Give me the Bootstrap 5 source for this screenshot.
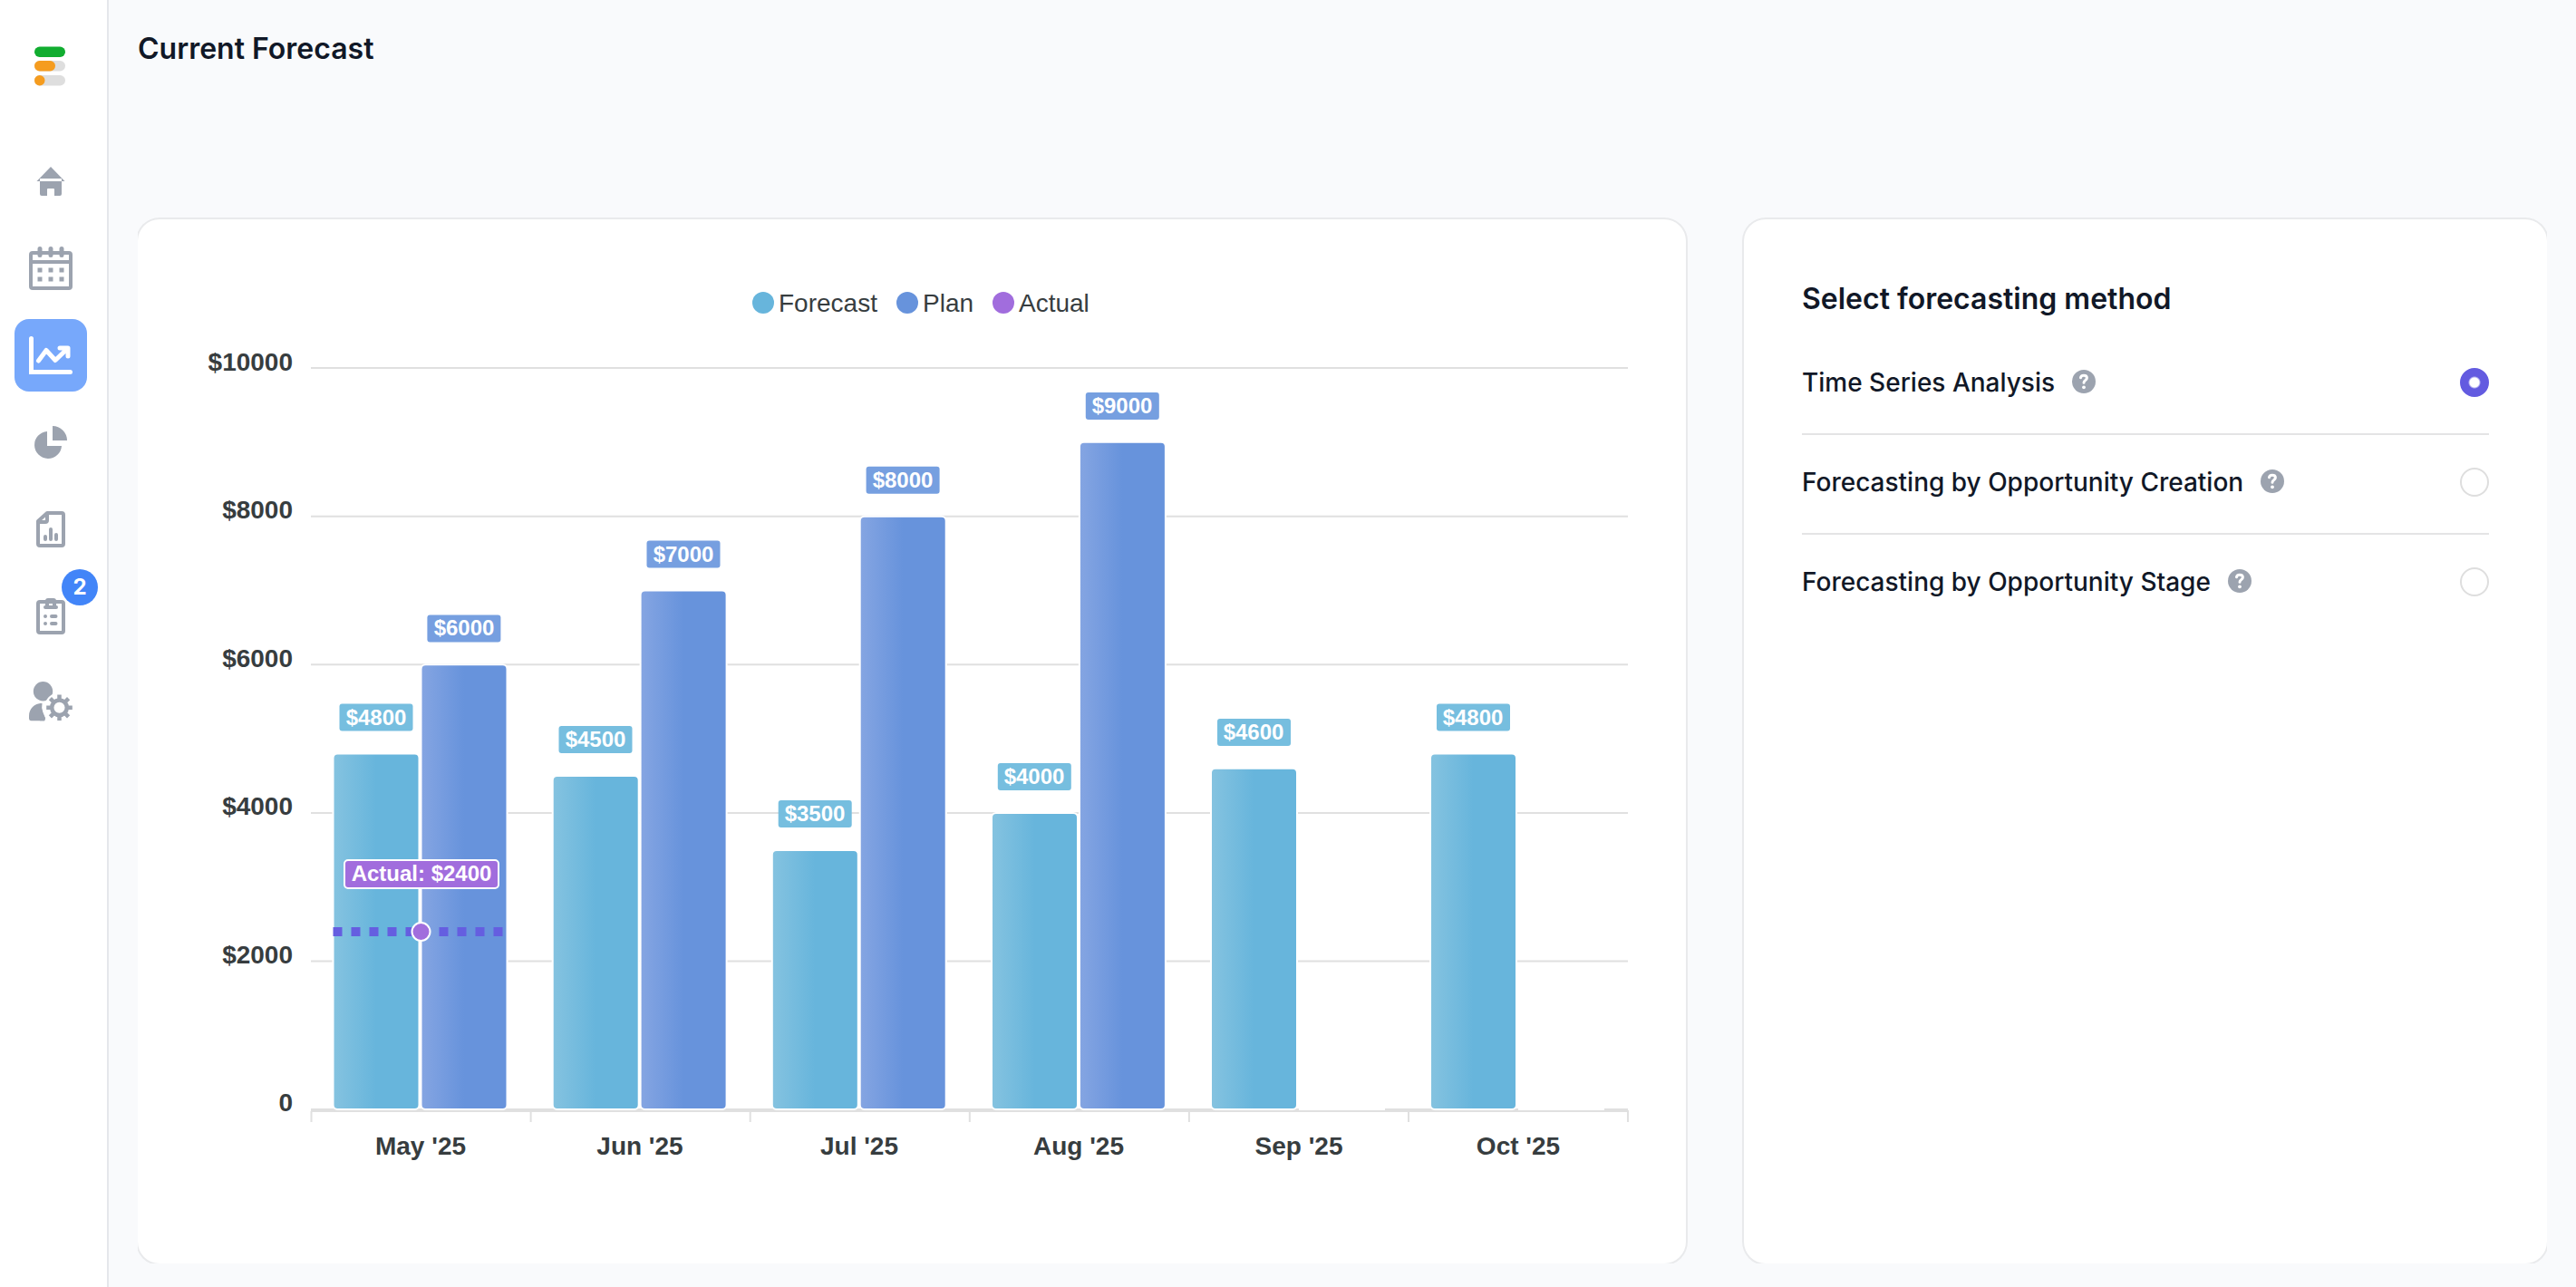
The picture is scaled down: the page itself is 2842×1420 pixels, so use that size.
<!DOCTYPE html>
<html lang="en">
<head>
<meta charset="utf-8">
<meta name="viewport" content="width=device-width, initial-scale=1">
<title>Current Forecast</title>
<link href="https://cdn.jsdelivr.net/npm/bootstrap@5.3.0/dist/css/bootstrap.min.css" rel="stylesheet">
<style>
  body { background: #f9fafc; color: #111827; font-family: Inter, sans-serif; }
  .side-rail { width: 120px; border-right: 2px solid #e5e7eb; padding: 0 16px; }
  .brand-link { width: 80px; height: 160px; padding: 51px 0 0 22px; }
  .rail-nav { gap: 16px; }
  .rail-link { width: 80px; height: 80px; border-radius: 16px; color: #9ca3af; }
  .rail-link svg { width: 48px; height: 48px; }
  .rail-link.active { background: #77a8fb; color: #fff; }
  .count-badge { top: -12px; right: -12px; width: 40px; height: 40px; background: #4285f8; color: #fff; font-size: 24px; line-height: 40px; font-weight: 700; }
  .page-main { min-width: 0; padding: 30px 32px 26px; }
  .page-title, .panel-title { font-size: 32px; line-height: 48px; font-weight: 600; margin: 0; }
  .page-title { margin-bottom: 160px; }
  .panel-area { overflow: hidden; padding-top: 4px; }
  .panel-box { background: #fff; border-radius: 24px; box-shadow: 0 0 0 2px #e9eaec; height: 100%; }
  .chart-col { padding-right: 64px; }
  .method-panel { padding: 64px; }
  .method-row { padding: 32px 0 36px; }
  .method-row + .method-row { border-top: 2px solid #e4e4e5; }
  .method-list { margin-top: 16px; }
  .method-row label { font-size: 28px; line-height: 40px; font-weight: 500; }
  .help-btn { margin-left: 19px; padding: 0 0 2px; color: #9ca3af; line-height: 0; }
  .method-row .form-check-input { width: 32px; height: 32px; border: 2px solid #dedede; margin: 0; }
  .method-row .form-check-input:checked { border-color: #635be0; background: #635be0 radial-gradient(circle, #fff 5px, #635be0 7px); }
  .chart-svg { font-family: "Liberation Sans", Arial, sans-serif; font-size: 28px; fill: #373d3f; }
  .axis-text { font-weight: 700; }
  .grid-lines, .axis-lines { stroke: #e0e0e0; stroke-width: 2; fill: none; }
  .bars-forecast { fill: url(#gForecast); stroke: #fff; stroke-width: 2; }
  .bars-plan { fill: url(#gPlan); stroke: #fff; stroke-width: 2; }
  .tags-forecast { fill: #76bedf; }
  .tags-plan { fill: #769fe0; }
  .tag-text { fill: #fff; font-size: 24px; font-weight: 700; }
</style>
</head>
<body>
<div class="d-flex min-vh-100">
  <aside class="side-rail bg-white flex-shrink-0">
    <a class="brand-link d-block" href="#" aria-label="Home page">
      <svg class="d-block" width="34" height="45" viewBox="0 0 34 45">
        <rect y=".5" width="34" height="11.500" rx="5.700" fill="#11ad30"/>
        <rect y="16" width="34" height="11.500" rx="5.700" fill="#dedede"/>
        <rect y="16" width="23" height="11.500" rx="5.700" fill="#f59c1f"/>
        <rect y="32" width="34" height="11.500" rx="5.700" fill="#dedede"/>
        <rect y="32" width="11.500" height="11.500" rx="5.700" fill="#f59c1f"/>
      </svg>
    </a>
    <nav class="rail-nav d-flex flex-column">
      <a class="rail-link d-flex align-items-center justify-content-center" href="#" aria-label="Dashboard">
        <svg viewBox="0 0 48 48" fill="currentColor"><path d="M24 8 8.500 24H12v-3h24v3h3.500z"/><path d="M12 24h24v14a2 2 0 0 1-2 2h-6v-7a1 1 0 0 0-1-1h-6a1 1 0 0 0-1 1v7h-6a2 2 0 0 1-2-2z"/></svg>
      </a>
      <a class="rail-link d-flex align-items-center justify-content-center" href="#" aria-label="Calendar">
        <svg viewBox="0 0 48 48" fill="none" stroke="currentColor" stroke-width="4"><rect x="2" y="7" width="44" height="39" rx="2"/><path d="M2 17h44"/><path stroke-width="5" stroke-linecap="round" d="M12 2.500v7M24 2.500v7M36 2.500v7"/><path stroke-width="5" d="M9.500 26h5M21.500 26h5M33.500 26h5M9.500 36h5M21.500 36h5M33.500 36h5"/></svg>
      </a>
      <a class="rail-link active d-flex align-items-center justify-content-center" href="#" aria-label="Forecast" aria-current="page">
        <svg viewBox="0 0 48 48" fill="none" stroke="currentColor" stroke-width="5" stroke-linecap="round" stroke-linejoin="round"><path d="M2.500 5.500v37h43" stroke-linejoin="miter"/><path d="M10.500 30 19 18.500 29 29.500 42 17M34 16h9v9"/></svg>
      </a>
      <a class="rail-link d-flex align-items-center justify-content-center" href="#" aria-label="Breakdown">
        <svg viewBox="0 0 48 48" fill="currentColor"><path d="M20 12v16h16a15 15 0 1 1-16-16z"/><path d="M26 6a16 16 0 0 1 16 16H26z"/></svg>
      </a>
      <a class="rail-link d-flex align-items-center justify-content-center" href="#" aria-label="Reports">
        <svg viewBox="0 0 48 48" fill="none" stroke="currentColor" stroke-width="4" stroke-linecap="round" stroke-linejoin="round"><path d="M20 6h16a2 2 0 0 1 2 2v32a2 2 0 0 1-2 2H12a2 2 0 0 1-2-2V15zM20 7v7a2 2 0 0 1-2 2h-7M18 32v3M24 24v11M30 30v5"/></svg>
      </a>
      <a class="rail-link position-relative d-flex align-items-center justify-content-center text-decoration-none" href="#" aria-label="Tasks, 2 open">
        <svg viewBox="0 0 48 48" fill="none" stroke="currentColor" stroke-width="4" stroke-linecap="round"><rect x="10" y="8" width="28" height="34" rx="2"/><path stroke="none" fill="currentColor" fill-rule="evenodd" d="M21 4h6a3 3 0 0 1 3 3v5a2 2 0 0 1 0 4H18a2 2 0 0 1 0-4V7a3 3 0 0 1 3-3zm1 4v4h4V8z"/><path d="M18 24h.01M25 24h4.500M18 32h.01M25 32h4.500"/></svg>
        <span class="count-badge position-absolute rounded-circle text-center">2</span>
      </a>
      <a class="rail-link d-flex align-items-center justify-content-center" href="#" aria-label="User settings">
        <svg viewBox="0 0 48 48" fill="currentColor"><circle cx="15.500" cy="10.700" r="10.700"/><path d="M0 41v-3c0-8 6-14 14-14v0a17 17 0 0 0 1.500 11l2.500 5.500-1 2.800H2.500A2.500 2.500 0 0 1 0 41z"/><circle cx="33.500" cy="28.700" r="16.500" fill="#fff"/><path d="M12 24h2.500a17 17 0 0 0 1 10.500L18 40.500l-.8 2.800H12z"/><circle cx="33.500" cy="28.700" r="8.300" fill="none" stroke="currentColor" stroke-width="4.500"/><path fill="none" stroke="currentColor" stroke-width="4.500" stroke-linecap="butt" d="M33.500 14.400v5M33.500 38v5M19.200 28.700h5M42.800 28.700h5M23.400 18.600l3.500 3.500M40.100 35.300l3.500 3.500M43.600 18.600l-3.500 3.500M26.900 35.300l-3.500 3.500"/></svg>
      </a>
    </nav>
  </aside>

  <main class="page-main d-flex flex-column flex-grow-1">
    <h1 class="page-title">Current Forecast</h1>
    <div class="panel-area flex-grow-1 d-flex">
      <div class="row g-0 w-100">
        <section class="col-8 chart-col" aria-label="Forecast chart">
          <div class="panel-box">
            <svg class="chart-svg d-block w-100" viewBox="152 242 1708 1152" role="img" aria-label="Forecast, plan and actual by month">
              <defs>
                <linearGradient id="gForecast"><stop offset="0" stop-color="#85c3e0"/><stop offset=".5" stop-color="#67b5dc"/></linearGradient>
                <linearGradient id="gPlan"><stop offset="0" stop-color="#85a5e2"/><stop offset=".5" stop-color="#6793dc"/></linearGradient>
              </defs>
              <g>
                <circle cx="842" cy="334" r="12" fill="#67b5dc"/><text x="859" y="344">Forecast</text>
                <circle cx="1001" cy="334" r="12" fill="#6793dc"/><text x="1018" y="344">Plan</text>
                <circle cx="1107" cy="334" r="12" fill="#a16ddd"/><text x="1124" y="344">Actual</text>
              </g>
              <path class="grid-lines" d="M343 406H1796M343 569.700H1796M343 733.300H1796M343 897H1796M343 1060.600H1796M343 1224H1796"/>
              <g class="axis-text" text-anchor="end">
                <text x="323" y="409">$10000</text><text x="323" y="572">$8000</text><text x="323" y="736">$6000</text>
                <text x="323" y="899">$4000</text><text x="323" y="1063">$2000</text><text x="323" y="1226">0</text>
              </g>
              <g class="bars-forecast">
                <rect x="367.500" y="831.500" width="95" height="392.500" rx="5"/>
                <rect x="609.700" y="856" width="95" height="368" rx="5"/>
                <rect x="851.800" y="938" width="95" height="286" rx="5"/>
                <rect x="1094" y="897" width="95" height="327" rx="5"/>
                <rect x="1336" y="847.800" width="95" height="376.200" rx="5"/>
                <rect x="1578" y="831.500" width="95" height="392.500" rx="5"/>
              </g>
              <g class="bars-plan">
                <rect x="464.500" y="733.300" width="95" height="490.700" rx="5"/>
                <rect x="706.600" y="651.500" width="95" height="572.500" rx="5"/>
                <rect x="948.700" y="569.700" width="95" height="654.300" rx="5"/>
                <rect x="1190.900" y="487.800" width="95" height="736.200" rx="5"/>
                <path d="M1433 1224h95M1675 1224h95"/>
              </g>
              <path class="axis-lines" d="M343 1226H1797M343.500 1226v12M585.600 1226v12M827.700 1226v12M1069.800 1226v12M1311.900 1226v12M1554 1226v12M1796 1226v12"/>
              <g class="axis-text" text-anchor="middle">
                <text x="464" y="1274">May '25</text><text x="706" y="1274">Jun '25</text><text x="948" y="1274">Jul '25</text>
                <text x="1190" y="1274">Aug '25</text><text x="1433" y="1274">Sep '25</text><text x="1675" y="1274">Oct '25</text>
              </g>
              <path d="M367.500 1028H464.500M464.500 1028H560" stroke="#655ee0" stroke-width="10" stroke-dasharray="10"/>
              <circle cx="464.500" cy="1028" r="10" fill="#a16ddd" stroke="#fff" stroke-width="2"/>
              <g class="tags-forecast">
                <rect x="374.500" y="776.500" width="81" height="30" rx="3"/>
                <rect x="616.500" y="801" width="81" height="30" rx="3"/>
                <rect x="858.700" y="883" width="81" height="30" rx="3"/>
                <rect x="1100.800" y="842" width="81" height="30" rx="3"/>
                <rect x="1343" y="793" width="81" height="30" rx="3"/>
                <rect x="1585" y="776.500" width="81" height="30" rx="3"/>
              </g>
              <g class="tags-plan">
                <rect x="471.400" y="678.500" width="81" height="30" rx="3"/>
                <rect x="713.500" y="596.500" width="81" height="30" rx="3"/>
                <rect x="955.600" y="514.700" width="81" height="30" rx="3"/>
                <rect x="1197.800" y="433" width="81" height="30" rx="3"/>
              </g>
              <rect x="380" y="949" width="170" height="31" rx="4" fill="#a16ddd" stroke="#fff" stroke-width="2"/>
              <g class="tag-text" text-anchor="middle">
                <text x="415" y="800">$4800</text><text x="657" y="824">$4500</text><text x="899" y="906">$3500</text>
                <text x="1141" y="865">$4000</text><text x="1383" y="816">$4600</text><text x="1625" y="800">$4800</text>
                <text x="512" y="701">$6000</text><text x="754" y="620">$7000</text><text x="996" y="538">$8000</text>
                <text x="1238" y="456">$9000</text><text x="465" y="972">Actual: $2400</text>
              </g>
            </svg>
          </div>
        </section>

        <section class="col-4">
          <div class="panel-box method-panel">
            <h2 class="panel-title">Select forecasting method</h2>
            <div class="method-list">
              <div class="method-row d-flex align-items-center">
                <label for="methodTime">Time Series Analysis</label>
                <button class="help-btn btn border-0" type="button" aria-label="About time series analysis"><svg width="26" height="26" viewBox="0 0 26 26"><circle cx="13" cy="13" r="13" fill="currentColor"/><path d="M9.500 8.700C9.700 7 11 6.200 12.900 6.200c2 0 3.500 1.100 3.500 2.900 0 2.500-3.400 2.600-3.400 5.100" fill="none" stroke="#fff" stroke-width="3" stroke-linecap="round"/><circle cx="13" cy="19.300" r="1.900" fill="#fff"/></svg></button>
                <input class="form-check-input ms-auto" type="radio" name="method" id="methodTime" checked>
              </div>
              <div class="method-row d-flex align-items-center">
                <label for="methodCreation">Forecasting by Opportunity Creation</label>
                <button class="help-btn btn border-0" type="button" aria-label="About opportunity creation"><svg width="26" height="26" viewBox="0 0 26 26"><circle cx="13" cy="13" r="13" fill="currentColor"/><path d="M9.500 8.700C9.700 7 11 6.200 12.900 6.200c2 0 3.500 1.100 3.500 2.900 0 2.500-3.400 2.600-3.400 5.100" fill="none" stroke="#fff" stroke-width="3" stroke-linecap="round"/><circle cx="13" cy="19.300" r="1.900" fill="#fff"/></svg></button>
                <input class="form-check-input ms-auto" type="radio" name="method" id="methodCreation">
              </div>
              <div class="method-row d-flex align-items-center">
                <label for="methodStage">Forecasting by Opportunity Stage</label>
                <button class="help-btn btn border-0" type="button" aria-label="About opportunity stage"><svg width="26" height="26" viewBox="0 0 26 26"><circle cx="13" cy="13" r="13" fill="currentColor"/><path d="M9.500 8.700C9.700 7 11 6.200 12.900 6.200c2 0 3.500 1.100 3.500 2.900 0 2.500-3.400 2.600-3.400 5.100" fill="none" stroke="#fff" stroke-width="3" stroke-linecap="round"/><circle cx="13" cy="19.300" r="1.900" fill="#fff"/></svg></button>
                <input class="form-check-input ms-auto" type="radio" name="method" id="methodStage">
              </div>
            </div>
          </div>
        </section>
      </div>
    </div>
  </main>
</div>
<script src="https://cdn.jsdelivr.net/npm/bootstrap@5.3.0/dist/js/bootstrap.bundle.min.js"></script>
</body>
</html>
